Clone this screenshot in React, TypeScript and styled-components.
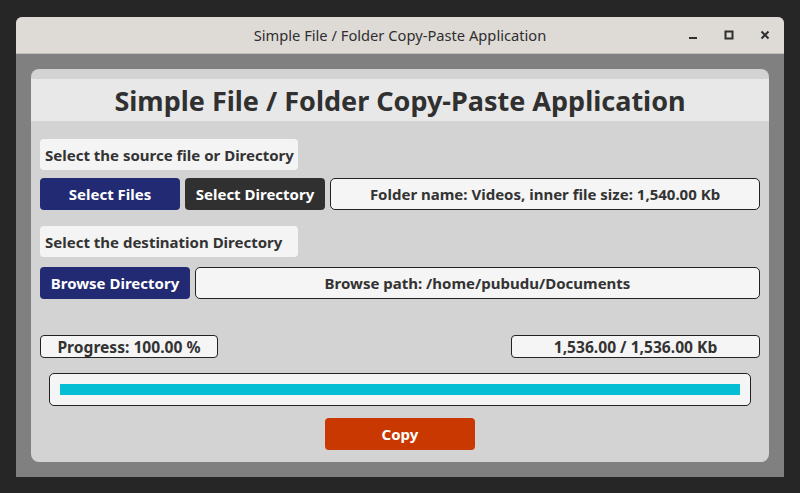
import React from 'react';
import styled, { createGlobalStyle } from 'styled-components';

const GlobalStyle = createGlobalStyle`
  html, body {
    margin: 0;
    padding: 0;
    background: #262626;
  }
  body {
    font-family: 'Noto Sans', Lato, sans-serif;
  }
`;

const Screen = styled.div`
  width: 800px;
  height: 493px;
  padding: 17px 16px 16px;
  box-sizing: border-box;
`;

const Window = styled.div`
  display: flex;
  flex-direction: column;
  height: 100%;
  border-radius: 6px 6px 0 0;
  overflow: hidden;
  background: #808080;
`;

const TitleBar = styled.div`
  position: relative;
  height: 37px;
  flex: 0 0 37px;
  display: flex;
  align-items: center;
  justify-content: center;
  background: #dedbd7;
  border-bottom: 1px solid #c0bcb6;
  color: #2f2f2f;
  font-size: 14.7px;
  padding-bottom: 1px;
  box-sizing: border-box;
`;

const Controls = styled.div`
  position: absolute;
  right: 14px;
  top: 0;
  height: 100%;
  display: flex;
  align-items: center;
  gap: 26px;
`;

const Body = styled.div`
  flex: 1;
  padding: 15px;
  display: flex;
`;

const Panel = styled.div`
  flex: 1;
  background: #d3d3d3;
  border-radius: 8px;
  padding: 10px 0 11px;
  display: flex;
  flex-direction: column;
`;

const Header = styled.h1`
  margin: 0;
  height: 42px;
  display: flex;
  align-items: center;
  justify-content: center;
  background: #e8e8e8;
  color: #303030;
  font-size: 27px;
  font-weight: 700;
`;

const Content = styled.div`
  padding: 0 9px;
  display: flex;
  flex-direction: column;
`;

const Label = styled.div<{ $top: number }>`
  margin-top: ${p => p.$top}px;
  width: 258px;
  height: 31px;
  box-sizing: border-box;
  padding-left: 5px;
  display: flex;
  align-items: center;
  background: #f4f4f4;
  border-radius: 4px;
  color: #333;
  font-size: 15px;
  font-weight: 700;
`;

const Row = styled.div<{ $top: number }>`
  margin-top: ${p => p.$top}px;
  display: flex;
  gap: 5px;
  height: 32px;
`;

const Button = styled.button<{ $bg: string; $w: number }>`
  width: ${p => p.$w}px;
  flex: 0 0 ${p => p.$w}px;
  height: 32px;
  border: none;
  border-radius: 4px;
  background: ${p => p.$bg};
  color: #fff;
  font-family: inherit;
  font-size: 15px;
  font-weight: 700;
  padding: 0;
`;

const InfoBox = styled.div`
  flex: 1;
  display: flex;
  align-items: center;
  justify-content: center;
  box-sizing: border-box;
  background: #f5f5f5;
  border: 1px solid #222;
  border-radius: 5px;
  color: #333;
  font-size: 15px;
  font-weight: 700;
`;

const StatusRow = styled.div`
  margin-top: 36px;
  display: flex;
  justify-content: space-between;
  height: 23px;
`;

const StatusBox = styled(InfoBox)<{ $w: number }>`
  flex: 0 0 ${p => p.$w}px;
  border-radius: 4px;
  font-size: 15.6px;
`;

const Track = styled.div`
  margin: 15px 9px 0;
  height: 33px;
  box-sizing: border-box;
  padding: 10px 10px;
  background: #f5f5f5;
  border: 1px solid #222;
  border-radius: 5px;
`;

const Fill = styled.div`
  height: 11px;
  background: #06bed4;
`;

const CopyRow = styled.div`
  margin-top: 12px;
  display: flex;
  justify-content: center;
`;

export default function App() {
  const progress = 100;
  return (
    <>
      <GlobalStyle />
      <Screen>
        <Window>
          <TitleBar>
            Simple File / Folder Copy-Paste Application
            <Controls>
              <svg width="10" height="10" viewBox="0 0 10 10">
                <rect x="1" y="7" width="8" height="2" fill="#2f2f2f" />
              </svg>
              <svg width="10" height="10" viewBox="0 0 10 10">
                <rect x="1.5" y="1.5" width="7" height="7" fill="none" stroke="#2f2f2f" strokeWidth="2" />
              </svg>
              <svg width="10" height="10" viewBox="0 0 10 10">
                <path d="M1.5 1.5 L8.5 8.5 M8.5 1.5 L1.5 8.5" stroke="#2f2f2f" strokeWidth="2" />
              </svg>
            </Controls>
          </TitleBar>
          <Body>
            <Panel>
              <Header>Simple File / Folder Copy-Paste Application</Header>
              <Content>
                <Label $top={18}>Select the source file or Directory</Label>
                <Row $top={8}>
                  <Button $bg="#212a72" $w={140}>Select Files</Button>
                  <Button $bg="#303030" $w={140}>Select Directory</Button>
                  <InfoBox>Folder name: Videos, inner file size: 1,540.00 Kb</InfoBox>
                </Row>
                <Label $top={16}>Select the destination Directory</Label>
                <Row $top={10}>
                  <Button $bg="#212a72" $w={150}>Browse Directory</Button>
                  <InfoBox>Browse path: /home/pubudu/Documents</InfoBox>
                </Row>
                <StatusRow>
                  <StatusBox $w={178}>Progress: 100.00 %</StatusBox>
                  <StatusBox $w={249}>1,536.00 / 1,536.00 Kb</StatusBox>
                </StatusRow>
                <Track>
                  <Fill style={{ width: `${progress}%` }} />
                </Track>
                <CopyRow>
                  <Button $bg="#c83800" $w={150}>Copy</Button>
                </CopyRow>
              </Content>
            </Panel>
          </Body>
        </Window>
      </Screen>
    </>
  );
}
